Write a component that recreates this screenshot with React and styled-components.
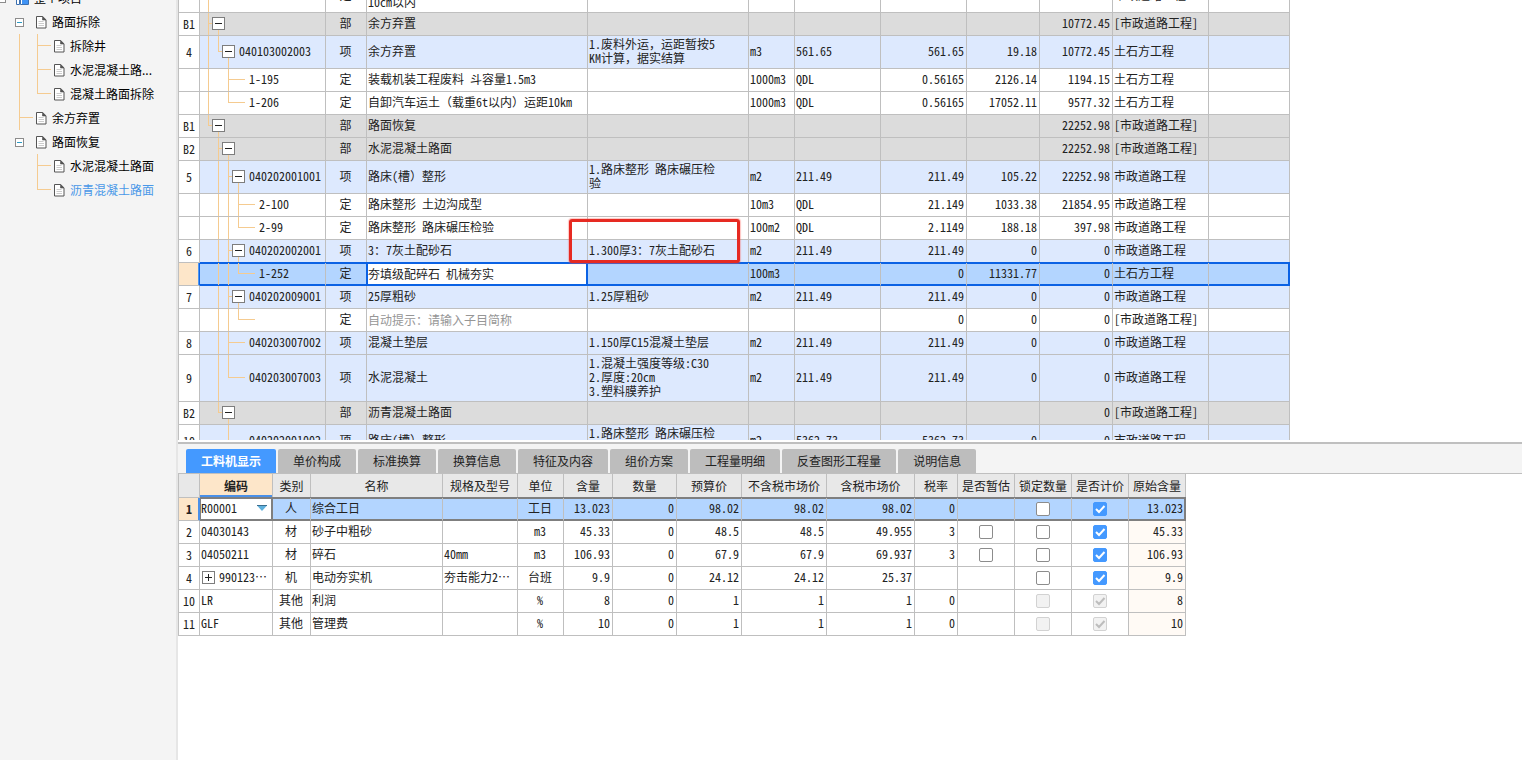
import React, { useState } from "react";
import styled, { createGlobalStyle, css } from "styled-components";

const GlobalStyle = createGlobalStyle`
  * { box-sizing: border-box; }
  body {
    margin: 0;
    overflow: hidden;
    background: #fff;
    color: #222;
    font-family: "Noto Sans CJK SC", sans-serif;
    font-size: 12px;
    line-height: 14px;
    text-spacing-trim: space-all;
  }
  input, select, button { font: inherit; color: inherit; margin: 0; }
`;

const Page = styled.div`
  display: flex;
  min-height: 100vh;
`;

/* ---------- sidebar ---------- */

const Sidebar = styled.nav`
  flex: none;
  width: 178px;
  height: 100vh;
  overflow: hidden;
  background: #f4f4f4;
  border-right: 2px solid #e6e6e6;
`;

const TreeList = styled.ul`
  list-style: none;
  margin: -14px 0 0;
  padding: 0;
`;

const TreeItem = styled.li`
  display: flex;
  align-items: center;
  height: 24px;
  padding-left: ${(p) => (p.$root ? 0 : p.$parent ? 15 : 19)}px;
`;

const TreeLink = styled.a`
  display: flex;
  align-items: center;
  gap: 5px;
  color: ${(p) => (p.$active ? "#4a98e8" : "#000")};
  text-decoration: none;
  white-space: nowrap;
`;

const TreeToggle = styled.button`
  flex: none;
  display: grid;
  place-items: center;
  width: 9px;
  height: 9px;
  margin-right: 12px;
  padding: 0;
  border: 1px solid #8c8c8c;
  background: #fff;
  &::after {
    content: "";
    width: 5px;
    height: 1px;
    background: #2b9ac4;
  }
  ${(p) => p.$root && "margin: 0 10px 0 -3px;"}
`;

// one column of connector lines; kind is none, pass, tee or end
const guideLines = css`
  background-image: linear-gradient(#f5cb90, #f5cb90), linear-gradient(#f5cb90, #f5cb90);
  background-repeat: no-repeat;
  background-position: 0 0, 0 calc(50% - 1px);
  background-size:
    ${(p) => (p.$kind === "none" ? "0 0" : p.$kind === "end" ? "1px calc(50% - 1px)" : "1px 100%")},
    ${(p) => (p.$kind === "tee" || p.$kind === "end" ? `${p.$reach}px 1px` : "0 0")};
`;

const SideGuide = styled.span`
  flex: none;
  align-self: stretch;
  width: ${(p) => (p.$last ? 17 : 18)}px;
  ${guideLines}
`;

const PageIcon = () => (
  <svg width="11" height="13" viewBox="0 0 11 13" aria-hidden="true">
    <path d="M.5.5h6.2l3.3 3.3v8.2H.5z" fill="#fff" stroke="#555" />
    <path d="M6.5.5v3.5h3.5z" fill="#555" stroke="#555" strokeWidth=".6" />
    <path d="M2.5 5.5h5M2.5 7.5h5.5M2.5 9.5h5.5" stroke="#ccc" />
  </svg>
);

const ProjectIcon = () => (
  <svg width="13" height="13" viewBox="0 0 13 13" aria-hidden="true">
    <path d="M.5 3.500h3v9h-3zM4.500 .5h8v12h-8z" fill="#fff" stroke="#3a6fb0" />
    <path d="M6 2h6v10H6z" fill="#3f93f5" />
  </svg>
);

const sideTree = [
  { text: "整个项目", root: true },
  { text: "路面拆除", parent: true },
  { text: "拆除井", guides: ["pass", "tee"] },
  { text: "水泥混凝土路...", guides: ["pass", "tee"] },
  { text: "混凝土路面拆除", guides: ["pass", "end"] },
  { text: "余方弃置", guides: ["tee"] },
  { text: "路面恢复", parent: true },
  { text: "水泥混凝土路面", guides: ["none", "tee"] },
  { text: "沥青混凝土路面", guides: ["none", "end"], active: true },
];

function SideTree() {
  return (
    <Sidebar>
      <TreeList>
        {sideTree.map((n, i) => (
          <TreeItem key={i} $root={n.root} $parent={n.parent}>
            {(n.root || n.parent) && <TreeToggle $root={n.root} aria-label={"折叠 " + n.text} />}
            {(n.guides || []).map((g, k) => (
              <SideGuide key={k} $kind={g} $reach={14} $last={k === n.guides.length - 1} />
            ))}
            <TreeLink href="#" $active={n.active}>
              {n.root ? <ProjectIcon /> : <PageIcon />}
              {n.text}
            </TreeLink>
          </TreeItem>
        ))}
      </TreeList>
    </Sidebar>
  );
}

/* ---------- shared grid parts ---------- */

const Main = styled.main`
  flex: 1;
  min-width: 0;
  display: flex;
  flex-direction: column;
`;

const Grid = styled.table`
  table-layout: fixed;
  border-collapse: separate;
  border-spacing: 0;
  border-left: 1px solid #bfbfbf;
  width: 0;
  font-feature-settings: "hwid";
`;

const Cell = styled.td`
  padding: 0 2px 2px 1px;
  border-right: 1px solid #bfbfbf;
  border-bottom: 1px solid #bfbfbf;
  text-align: ${(p) => p.$align || "left"};
  vertical-align: middle;
  white-space: pre;
  overflow: hidden;
`;

const IndexCell = styled(Cell)`
  padding: 0;
  background: #fff;
  text-align: center;
`;

// Latin text is half width in the grid, Chinese punctuation is not
const Wide = styled.span`
  font-feature-settings: normal;
`;

const gridText = (text) =>
  (text || "").split(/([，（）])/).map((part, i) => (i % 2 ? <Wide key={i}>{part}</Wide> : part));

const ToggleBox = styled.button`
  flex: none;
  display: grid;
  place-items: center;
  width: 13px;
  height: 13px;
  padding: 0;
  border: 1px solid #7d7d7d;
  background: #fff;
  color: #222;
`;

const ToggleMark = ({ plus }) => (
  <svg width="9" height="9" viewBox="0 0 9 9" aria-hidden="true">
    <path d={plus ? "M1 4.500h7M4.500 1v7" : "M1 4.500h7"} stroke="currentColor" />
  </svg>
);

/* ---------- bill of quantities ---------- */

const BillPane = styled.section`
  position: relative;
  flex: none;
  height: 440px;
  overflow: hidden;
`;

const BillGrid = styled(Grid)`
  margin-top: -20px;
`;

const rowFill = { section: "#dcdcdc", item: "#dde9fe", quota: "#fff" };

const NameCell = styled(Cell)``;

const BillRow = styled.tr`
  height: ${(p) => p.$height}px;
  background: ${(p) => rowFill[p.$kind]};
  ${(p) =>
    p.$selected &&
    css`
      background: #b3d5ff;
      ${Cell} {
        border-bottom-color: #0b62e4;
        box-shadow: 0 -1px 0 #0b62e4, inset 0 1px 0 #0b62e4, inset 0 -1px 0 #0b62e4;
      }
      ${Cell}:last-child {
        border-right-color: #0b62e4;
        box-shadow: 0 -1px 0 #0b62e4, inset 0 1px 0 #0b62e4, inset 0 -1px 0 #0b62e4, inset -1px 0 0 #0b62e4;
      }
      ${IndexCell} {
        background: #fde6c9;
        border-right-color: #0b62e4;
        border-bottom-color: #bfbfbf;
        box-shadow: inset -1px 0 0 #4f97ee;
      }
      ${NameCell} {
        background: #fff;
        border-right-color: #0b62e4;
        box-shadow: 0 -1px 0 #0b62e4, -1px 0 0 #0b62e4, inset 0 1px 0 #0b62e4, inset 0 -1px 0 #0b62e4,
          inset 1px 0 0 #0b62e4, inset -1px 0 0 #0b62e4;
      }
    `}
`;

const CodeCell = styled(Cell)`
  padding: 0 0 0 8px;
`;

const CodeTree = styled.div`
  display: flex;
  align-items: center;
  height: ${(p) => p.$height}px;
  padding-bottom: 2px;
`;

const Guide = styled.span`
  flex: none;
  align-self: stretch;
  width: 10px;
  margin-bottom: -2px;
  ${guideLines}
`;

const Dash = styled.span`
  flex: none;
  width: 7px;
  height: 1px;
  margin-right: 4px;
  background: #f5cb90;
`;

// the box and the short line that runs down to its first child
const Node = styled.span`
  flex: none;
  align-self: stretch;
  display: grid;
  place-items: center;
  width: 13px;
  margin: 0 4px -2px -6px;
  padding-bottom: 2px;
  background: linear-gradient(#f5cb90, #f5cb90) 50% 100% / 1px 50% no-repeat;
`;

const CellInput = styled.input`
  display: block;
  width: 100%;
  height: 16px;
  padding: 0;
  border: 0;
  outline: 0;
  background: transparent;
  font-feature-settings: "hwid";
  &::placeholder { color: #969696; opacity: 1; }
`;

const RedMark = styled.div`
  position: absolute;
  left: 391px;
  top: 219px;
  width: 171px;
  height: 44px;
  border: 3px solid #e62a22;
  border-radius: 3px;
  box-shadow: 0 0 1px 1px rgba(255, 90, 80, 0.35);
  pointer-events: none;
`;

const billColumns = [21, 126, 41, 221, 161, 46, 86, 86, 73, 73, 96, 81];

// spec, unit, expression, amount, price, total, specialty
const bill = [
  { h: 33, kind: "quota", guides: ["pass"], bare: true, type: "定", name: "人工运土方\n10cm以内", vals: ["", "", "", "", "", "", "市政道路工程"] },
  { no: "B1", kind: "section", guides: ["tee"], box: true, type: "部", name: "余方弃置", vals: ["", "", "", "", "", "10772.45", "[市政道路工程]"] },
  { no: "4", h: 33, kind: "item", guides: ["pass", "end"], box: true, code: "040103002003", type: "项", name: "余方弃置", vals: ["1.废料外运，运距暂按5\nKM计算，据实结算", "m3", "561.65", "561.65", "19.18", "10772.45", "土石方工程"] },
  { kind: "quota", guides: ["pass", "none", "tee"], code: "1-195", type: "定", name: "装载机装工程废料 斗容量1.5m3", vals: ["", "1000m3", "QDL", "0.56165", "2126.14", "1194.15", "土石方工程"] },
  { kind: "quota", guides: ["pass", "none", "end"], code: "1-206", type: "定", name: "自卸汽车运土（载重6t以内）运距10km", vals: ["", "1000m3", "QDL", "0.56165", "17052.11", "9577.32", "土石方工程"] },
  { no: "B1", kind: "section", guides: ["end"], box: true, type: "部", name: "路面恢复", vals: ["", "", "", "", "", "22252.98", "[市政道路工程]"] },
  { no: "B2", kind: "section", guides: ["none", "tee"], box: true, type: "部", name: "水泥混凝土路面", vals: ["", "", "", "", "", "22252.98", "[市政道路工程]"] },
  { no: "5", h: 33, kind: "item", guides: ["none", "pass", "tee"], box: true, code: "040202001001", type: "项", name: "路床(槽）整形", vals: ["1.路床整形 路床碾压检\n验", "m2", "211.49", "211.49", "105.22", "22252.98", "市政道路工程"] },
  { kind: "quota", guides: ["none", "pass", "pass", "tee"], code: "2-100", type: "定", name: "路床整形 土边沟成型", vals: ["", "10m3", "QDL", "21.149", "1033.38", "21854.95", "市政道路工程"] },
  { kind: "quota", guides: ["none", "pass", "pass", "end"], code: "2-99", type: "定", name: "路床整形 路床碾压检验", vals: ["", "100m2", "QDL", "2.1149", "188.18", "397.98", "市政道路工程"] },
  { no: "6", kind: "item", guides: ["none", "pass", "tee"], box: true, code: "040202002001", type: "项", name: "3：7灰土配砂石", vals: ["1.300厚3：7灰土配砂石", "m2", "211.49", "211.49", "0", "0", "市政道路工程"] },
  { kind: "quota", selected: true, guides: ["none", "pass", "pass", "end"], code: "1-252", type: "定", name: "夯填级配碎石 机械夯实", vals: ["", "100m3", "", "0", "11331.77", "0", "土石方工程"] },
  { no: "7", kind: "item", guides: ["none", "pass", "tee"], box: true, code: "040202009001", type: "项", name: "25厚粗砂", vals: ["1.25厚粗砂", "m2", "211.49", "211.49", "0", "0", "市政道路工程"] },
  { kind: "quota", guides: ["none", "pass", "pass", "end"], type: "定", hint: "自动提示：请输入子目简称", vals: ["", "", "", "0", "0", "0", "[市政道路工程]"] },
  { no: "8", kind: "item", guides: ["none", "pass", "tee"], code: "040203007002", type: "项", name: "混凝土垫层", vals: ["1.150厚C15混凝土垫层", "m2", "211.49", "211.49", "0", "0", "市政道路工程"] },
  { no: "9", h: 47, kind: "item", guides: ["none", "pass", "end"], code: "040203007003", type: "项", name: "水泥混凝土", vals: ["1.混凝土强度等级:C30\n2.厚度:20cm\n3.塑料膜养护", "m2", "211.49", "211.49", "0", "0", "市政道路工程"] },
  { no: "B2", kind: "section", guides: ["none", "end"], box: true, type: "部", name: "沥青混凝土路面", vals: ["", "", "", "", "", "0", "[市政道路工程]"] },
  { no: "10", h: 33, kind: "item", guides: ["none", "none", "tee"], code: "040202001002", type: "项", name: "路床(槽）整形", vals: ["1.路床整形 路床碾压检\n\n", "m2", "5362.73", "5362.73", "0", "0", "市政道路工程"] },
];

function BillName({ row }) {
  const [value, setValue] = useState(row.selected ? row.name : "");
  if (!row.selected && !row.hint) return gridText(row.name);
  return (
    <CellInput
      aria-label="名称"
      placeholder={row.hint}
      value={value}
      onChange={(e) => setValue(e.target.value)}
    />
  );
}

function BillTable() {
  return (
    <BillPane>
      <BillGrid>
        <colgroup>
          {billColumns.map((w, i) => <col key={i} width={w} />)}
        </colgroup>
        <tbody>
          {bill.map((row, i) => {
            const height = row.h || 23;
            return (
              <BillRow key={i} $height={height} $kind={row.kind} $selected={row.selected}>
                <IndexCell>{row.no}</IndexCell>
                <CodeCell>
                  <CodeTree $height={height - 1}>
                    {row.guides.map((g, k) => <Guide key={k} $kind={g} $reach={10} />)}
                    {row.box && (
                      <Node>
                        <ToggleBox aria-label="折叠"><ToggleMark /></ToggleBox>
                      </Node>
                    )}
                    {!row.box && !row.bare && <Dash />}
                    {row.code}
                  </CodeTree>
                </CodeCell>
                <Cell $align="center">{row.type}</Cell>
                <NameCell><BillName row={row} /></NameCell>
                {row.vals.map((v, k) => (
                  <Cell key={k} $align={k > 2 && k < 6 ? "right" : "left"}>{gridText(v)}</Cell>
                ))}
                <Cell />
              </BillRow>
            );
          })}
        </tbody>
      </BillGrid>
      <RedMark />
    </BillPane>
  );
}

/* ---------- detail tabs ---------- */

const TabBar = styled.div`
  display: flex;
  align-items: flex-end;
  gap: 2px;
  height: 32px;
  margin-top: 2px;
  padding-left: 8px;
  background: #f4f4f4;
  border-top: 2px solid #bfbfbf;
  border-bottom: 1px solid #bfbfbf;
`;

const Tab = styled.button`
  height: 24px;
  padding: 0 15px;
  border: 0;
  border-radius: 2px 2px 0 0;
  background: ${(p) => (p.$active ? "#4499ff" : "#bdbdbd")};
  color: ${(p) => (p.$active ? "#fff" : "#222")};
  font-weight: ${(p) => (p.$active ? 700 : 400)};
  white-space: nowrap;
`;

const tabs = ["工料机显示", "单价构成", "标准换算", "换算信息", "特征及内容", "组价方案", "工程量明细", "反查图形工程量", "说明信息"];

/* ---------- resources ---------- */

const HeadRow = styled.tr`
  height: 24px;
`;

const HeadCell = styled.th`
  padding: 0;
  border-right: 1px solid #bfbfbf;
  border-bottom: 1px solid #bfbfbf;
  background: ${(p) => (p.$active ? "#fde6c9" : "#e8e8e8")};
  box-shadow: ${(p) => (p.$active ? "inset 0 -2px 0 #4a90e8" : "none")};
  font-weight: ${(p) => (p.$active ? 700 : 400)};
  white-space: nowrap;
`;

const OriginCell = styled(Cell)`
  background: #fffaf5;
`;

const PickCell = styled(Cell)``;

const ResRow = styled.tr`
  height: 23px;
  ${(p) =>
    p.$selected &&
    css`
      background: #b3d5ff;
      ${Cell} {
        border-bottom-color: #7f7f7f;
        box-shadow: 0 -1px 0 #7f7f7f, inset 0 1px 0 #7f7f7f, inset 0 -1px 0 #7f7f7f;
      }
      ${IndexCell} {
        background: #fde6c9;
        border-right-color: #4a90e8;
        border-bottom-color: #bfbfbf;
        box-shadow: inset -1px 0 0 #4a90e8;
        font-weight: 700;
      }
      ${PickCell} {
        background: #fff;
        border-right-color: #7f7f7f;
        box-shadow: 0 -1px 0 #7f7f7f, inset 0 0 0 1px #7f7f7f;
      }
      ${OriginCell} {
        background: #b3d5ff;
        border-right-color: #7f7f7f;
        box-shadow: 0 -1px 0 #7f7f7f, inset 0 1px 0 #7f7f7f, inset 0 -1px 0 #7f7f7f, inset -1px 0 0 #7f7f7f;
      }
    `}
`;

const Pick = styled.div`
  display: grid;
  align-items: center;
  > * { grid-area: 1 / 1; }
  svg { justify-self: end; margin-right: 3px; pointer-events: none; }
`;

const CodeSelect = styled.select`
  appearance: none;
  width: 100%;
  height: 18px;
  padding: 0;
  border: 0;
  background: transparent;
  font-feature-settings: "hwid";
`;

const CodeBox = styled.div`
  display: flex;
  align-items: center;
  gap: 4px;
  padding-left: 1px;
`;

const CheckCell = styled(Cell)`
  padding: 0;
`;

const CheckWrap = styled.label`
  display: grid;
  justify-content: center;
  align-items: center;
  > * { grid-area: 1 / 1; }
  svg { visibility: hidden; pointer-events: none; color: #fff; }
  input:checked + svg { visibility: visible; }
  input:disabled + svg { color: #bdbdbd; }
`;

const CheckInput = styled.input`
  appearance: none;
  width: 14px;
  height: 14px;
  border: 1px solid #8c8c8c;
  border-radius: 2px;
  background: #fff;
  &:checked { background: #4499ff; border-color: #4499ff; }
  &:disabled { background: #f2f2f2; border-color: #d2d2d2; }
`;

// state: on, off, lock-on, lock-off
function Check({ state, label }) {
  const [on, setOn] = useState(state === "on" || state === "lock-on");
  if (!state) return null;
  return (
    <CheckWrap>
      <CheckInput
        type="checkbox"
        aria-label={label}
        checked={on}
        disabled={state.startsWith("lock")}
        onChange={(e) => setOn(e.target.checked)}
      />
      <svg width="14" height="14" viewBox="0 0 14 14" aria-hidden="true">
        <path d="M3 7l3 3 5.500-6" fill="none" stroke="currentColor" strokeWidth="2" />
      </svg>
    </CheckWrap>
  );
}

const resColumns = [
  [21, ""], [73, "编码"], [38, "类别"], [132, "名称"], [75, "规格及型号"], [46, "单位"],
  [49, "含量"], [64, "数量"], [65, "预算价"], [85, "不含税市场价"], [88, "含税市场价"],
  [43, "税率"], [57, "是否暂估"], [57, "锁定数量"], [57, "是否计价"], [57, "原始含量"],
];

const resources = [
  { no: "1", code: "R00001", selected: true, type: "人", name: "综合工日", unit: "工日", nums: ["13.023", "0", "98.02", "98.02", "98.02", "0"], checks: ["", "off", "on"], origin: "13.023" },
  { no: "2", code: "04030143", type: "材", name: "砂子中粗砂", unit: "m3", nums: ["45.33", "0", "48.5", "48.5", "49.955", "3"], checks: ["off", "off", "on"], origin: "45.33" },
  { no: "3", code: "04050211", type: "材", name: "碎石", spec: "40mm", unit: "m3", nums: ["106.93", "0", "67.9", "67.9", "69.937", "3"], checks: ["off", "off", "on"], origin: "106.93" },
  { no: "4", code: "990123⋯", plus: true, type: "机", name: "电动夯实机", spec: "夯击能力2⋯", unit: "台班", nums: ["9.9", "0", "24.12", "24.12", "25.37", ""], checks: ["", "off", "on"], origin: "9.9" },
  { no: "10", code: "LR", type: "其他", name: "利润", unit: "%", nums: ["8", "0", "1", "1", "1", "0"], checks: ["", "lock-off", "lock-on"], origin: "8" },
  { no: "11", code: "GLF", type: "其他", name: "管理费", unit: "%", nums: ["10", "0", "1", "1", "1", "0"], checks: ["", "lock-off", "lock-on"], origin: "10" },
];

const checkLabels = ["是否暂估", "锁定数量", "是否计价"];

function ResourceCode({ row }) {
  if (row.selected) {
    return (
      <Pick>
        <CodeSelect aria-label="编码">
          <option>{row.code}</option>
        </CodeSelect>
        <svg width="10" height="6" viewBox="0 0 10 6" aria-hidden="true">
          <path d="M0 .5h10L5 6z" fill="#5fb0dc" />
          <path d="M0 .5h10" stroke="#3a6f90" />
        </svg>
      </Pick>
    );
  }
  if (row.plus) {
    return (
      <CodeBox>
        <ToggleBox aria-label="展开"><ToggleMark plus /></ToggleBox>
        {row.code}
      </CodeBox>
    );
  }
  return row.code;
}

function ResourceTable() {
  return (
    <Grid>
      <colgroup>
        {resColumns.map(([w], i) => <col key={i} width={w} />)}
      </colgroup>
      <thead>
        <HeadRow>
          {resColumns.map(([, title], i) => <HeadCell key={i} $active={i === 1}>{title}</HeadCell>)}
        </HeadRow>
      </thead>
      <tbody>
        {resources.map((row) => (
          <ResRow key={row.no} $selected={row.selected}>
            <IndexCell>{row.no}</IndexCell>
            <PickCell><ResourceCode row={row} /></PickCell>
            <Cell $align="center">{row.type}</Cell>
            <Cell>{row.name}</Cell>
            <Cell>{row.spec}</Cell>
            <Cell $align="center">{row.unit}</Cell>
            {row.nums.map((n, k) => <Cell key={k} $align="right">{n}</Cell>)}
            {row.checks.map((state, k) => (
              <CheckCell key={k}><Check state={state} label={checkLabels[k]} /></CheckCell>
            ))}
            <OriginCell $align="right">{row.origin}</OriginCell>
          </ResRow>
        ))}
      </tbody>
    </Grid>
  );
}

export default function App() {
  const [tab, setTab] = useState(0);
  return (
    <>
      <GlobalStyle />
      <Page>
        <SideTree />
        <Main>
          <BillTable />
          <TabBar role="tablist">
            {tabs.map((t, i) => (
              <Tab key={t} role="tab" aria-selected={i === tab} $active={i === tab} onClick={() => setTab(i)}>
                {t}
              </Tab>
            ))}
          </TabBar>
          <ResourceTable />
        </Main>
      </Page>
    </>
  );
}
